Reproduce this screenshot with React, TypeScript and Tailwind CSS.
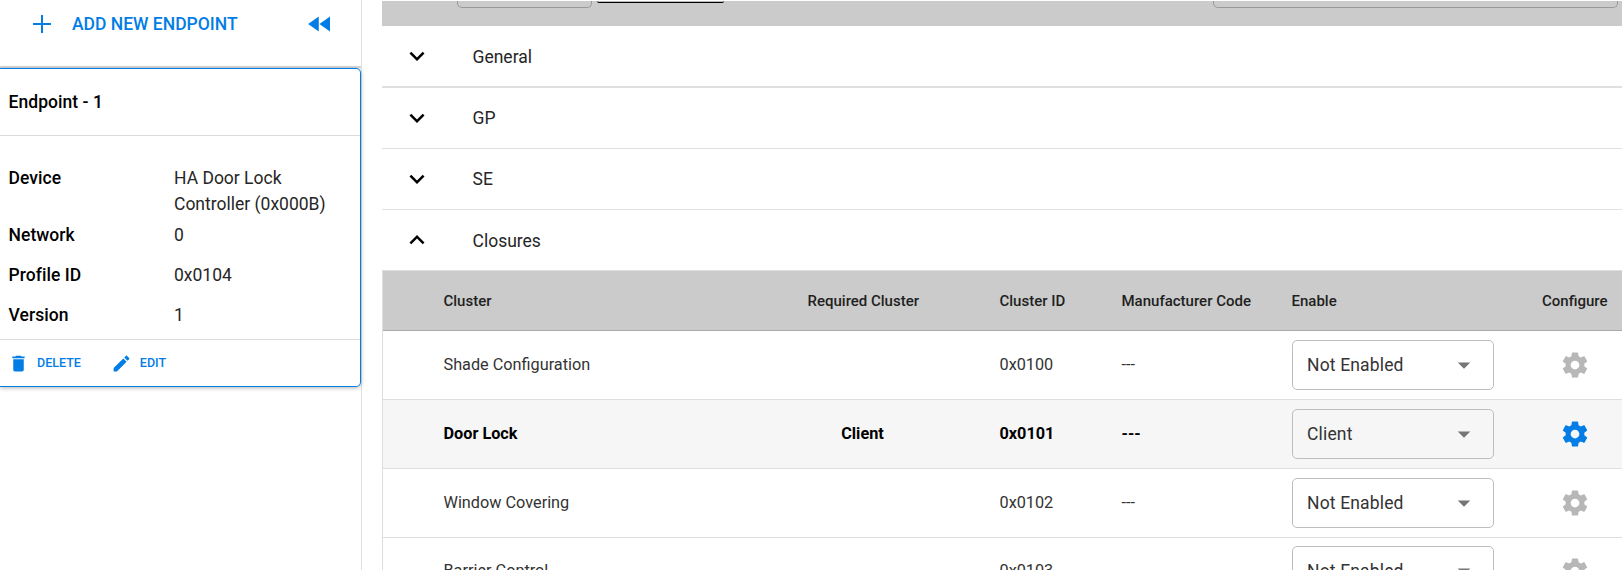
import React from "react";

const sections = [
  { name: "General", open: false, cls: "h-[62px] border-b-2", text: "pt-0.5" },
  { name: "GP", open: false, cls: "h-[61px] border-b", text: "" },
  { name: "SE", open: false, cls: "h-[61px] border-b", text: "" },
  { name: "Closures", open: true, cls: "h-[60px]", text: "pt-0.5" },
];

const details = [
  { label: "Device", value: "HA Door Lock Controller (0x000B)", cls: "h-[57px]" },
  { label: "Network", value: "0", cls: "h-10" },
  { label: "Profile ID", value: "0x0104", cls: "h-10" },
  { label: "Version", value: "1", cls: "h-10" },
];

const clusters = [
  { name: "Shade Configuration", required: "", id: "0x0100", enable: "Not Enabled", cls: "h-[69px]" },
  { name: "Door Lock", required: "Client", id: "0x0101", enable: "Client", cls: "h-[69px]" },
  { name: "Window Covering", required: "", id: "0x0102", enable: "Not Enabled", cls: "h-[69px]" },
  { name: "Barrier Control", required: "", id: "0x0103", enable: "Not Enabled", cls: "h-[67px]" },
];

const columns = "grid grid-cols-[364px_192px_122px_170px_202px_1fr] pl-[60.5px] items-center";

function Icon({ d, className }: { d: string; className: string }) {
  return (
    <svg viewBox="0 0 24 24" fill="currentColor" className={`shrink-0 ${className}`}>
      <path d={d} />
    </svg>
  );
}

const paths = {
  rewind: "M11 18V6l-8.5 6 8.5 6zm.5-6l8.500 6V6l-8.500 6z",
  trash: "M6 19c0 1.1.9 2 2 2h8c1.1 0 2-.9 2-2V7H6v12zM19 4h-3.500l-1-1h-5l-1 1H5v2h14V4z",
  pencil:
    "M3 17.250V21h3.750L17.810 9.940l-3.750-3.750L3 17.250zM20.710 7.040c.39-.39.39-1.020 0-1.410l-2.340-2.340c-.39-.39-1.020-.39-1.410 0l-1.830 1.830 3.750 3.750 1.830-1.830z",
  down: "M7.410 8.590L12 13.170l4.590-4.580L18 10l-6 6-6-6 1.410-1.410z",
  up: "M7.410 15.410L12 10.830l4.590 4.580L18 14l-6-6-6 6z",
  caret: "M7 10l5 5 5-5z",
  gear: "M19.43 12.98c.04-.32.07-.64.07-.98s-.03-.66-.07-.98l2.110-1.650c.19-.15.24-.42.12-.64l-2-3.460c-.12-.22-.39-.3-.61-.22l-2.490 1c-.52-.4-1.080-.73-1.690-.98l-.38-2.650C14.460 2.180 14.250 2 14 2h-4c-.25 0-.46.18-.49.42l-.38 2.650c-.61.25-1.170.59-1.690.98l-2.490-1c-.23-.09-.49 0-.61.22l-2 3.460c-.13.22-.07.49.12.64l2.110 1.650c-.04.32-.07.65-.07.98s.03.66.07.98l-2.110 1.650c-.19.15-.24.42-.12.64l2 3.460c.12.22.39.3.61.22l2.490-1c.52.4 1.080.73 1.690.98l.38 2.650c.03.24.24.42.49.42h4c.25 0 .46-.18.49-.42l.38-2.650c.61-.25 1.170-.59 1.690-.98l2.490 1c.23.09.49 0 .61-.22l2-3.460c.12-.22.07-.49-.12-.64l-2.110-1.650zM12 15.500c-1.930 0-3.500-1.570-3.500-3.500s1.570-3.500 3.500-3.500 3.500 1.570 3.500 3.500-1.570 3.500-3.500 3.500z",
};

function Sidebar() {
  return (
    <aside className="h-full w-[362px] shrink-0 border-r border-[#e0e0e0]">
      <div className="flex h-[68px] items-start justify-between border-b-2 border-[#d8d8d8] pl-[31px] pr-[26.5px] pt-2">
        <button className="flex h-8 items-center text-[17.5px] font-medium text-[#027de5]">
          <svg viewBox="0 0 22 22" className="mr-[19px] size-[22px]" stroke="currentColor" strokeWidth="2">
            <path d="M11 2v18M2 11h18" />
          </svg>
          ADD NEW ENDPOINT
        </button>
        <Icon d={paths.rewind} className="mt-px size-[30px] text-[#027de5]" />
      </div>
      <div className="h-[319px] rounded-r-[5px] border border-l-0 border-[#027de5] shadow-[0_1px_4px_rgba(0,0,0,0.3)]">
        <div className="flex h-[67px] items-center border-b border-[#dcdcdc] pl-[8.5px] text-[17.5px] font-medium tracking-[0.05px]">
          Endpoint - 1
        </div>
        <div className="h-[204px] border-b border-[#dcdcdc] pl-[8.5px] pt-[29px] text-[17.5px] leading-[26px]">
          {details.map((d) => (
            <div key={d.label} className={`flex ${d.cls}`}>
              <div className="w-[165.5px] shrink-0 font-medium tracking-[0.05px]">{d.label}</div>
              <div className="w-[165px] text-[#262626]">{d.value}</div>
            </div>
          ))}
        </div>
        <div className="flex h-[46px] items-center pl-2 text-[12.5px] font-medium text-[#027de5]">
          <Icon d={paths.trash} className="mr-[8px] size-[21px]" />
          DELETE
          <Icon d={paths.pencil} className="ml-[30px] mr-[8px] size-[21px]" />
          EDIT
        </div>
      </div>
    </aside>
  );
}

export default function App() {
  return (
    <div className="flex h-[570px] w-[1622px] overflow-hidden bg-white font-[Roboto,sans-serif] text-black">
      <Sidebar />
      <main className="ml-5 flex min-w-0 flex-1 flex-col pt-px">
        <div className="flex h-[25px] shrink-0 items-start bg-[#cbcbcb] pl-[75px]">
          <div className="h-[7px] w-[135px] rounded-b-[5px] border border-t-0 border-[#999]" />
          <div className="ml-[5px] h-0.5 w-[127px] rounded-b-[3px] border-b border-black bg-[#bbb]" />
          <div className="ml-auto mr-1 h-[7px] w-[405px] rounded-b-[5px] border border-t-0 border-[#999]" />
        </div>
        {sections.map((s) => (
          <div
            key={s.name}
            className={`flex shrink-0 items-center border-[#e0e0e0] pl-5 text-[17.5px] text-[#262626] ${s.cls}`}
          >
            <Icon d={s.open ? paths.up : paths.down} className="mr-[40.5px] size-[30px] text-black" />
            <span className={s.text}>{s.name}</span>
          </div>
        ))}
        <div className="shrink-0 border-l border-t border-[#dedede]">
          <div className={`${columns} h-[60px] border-b border-[#a9a9a9] bg-[#cbcbcb] pt-0.5 text-[15px] font-medium text-[#1f1f1f]`}>
            <div>Cluster</div>
            <div>Required Cluster</div>
            <div>Cluster ID</div>
            <div>Manufacturer Code</div>
            <div>Enable</div>
            <div className="pr-[14.5px] text-right">Configure</div>
          </div>
          {clusters.map((c) => {
            const active = c.required !== "";
            return (
              <div
                key={c.id}
                className={`${columns} ${c.cls} border-b border-[#dedede] text-[16.25px] ${
                  active ? "bg-[#f6f6f6] font-bold text-black" : "text-[#333]"
                }`}
              >
                <div>{c.name}</div>
                <div className="w-[110px] text-center">{c.required}</div>
                <div>{c.id}</div>
                <div>---</div>
                <div className="ml-[0.5px] -mr-[0.5px] flex h-[50px] items-center justify-between rounded-[5px] border border-[#bdbdbd] px-[14px] text-[17.5px] font-normal tracking-[0.16px] text-[#333]">
                  {c.enable}
                  <Icon d={paths.caret} className="size-[30px] text-[#757575]" />
                </div>
                <div className="flex justify-end pr-[32px]">
                  <Icon d={paths.gear} className={`size-[30px] ${active ? "text-[#027de5]" : "text-[#b7b7b7]"}`} />
                </div>
              </div>
            );
          })}
        </div>
      </main>
    </div>
  );
}
